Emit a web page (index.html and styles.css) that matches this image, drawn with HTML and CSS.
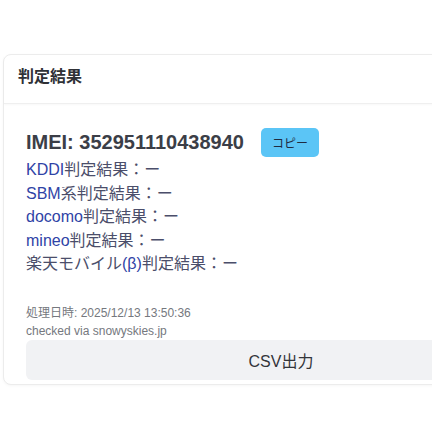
FILE: index.html
```html
<!DOCTYPE html>
<html lang="ja">
<head>
<meta charset="utf-8">
<link rel="stylesheet" href="styles.css">
</head>
<body>
<div class="page">
  <div class="card">
    <div class="card-header">判定結果</div>
    <div class="card-body">
      <div class="imei-row">
        <span class="imei">IMEI: 352951110438940</span>
        <button class="copy-btn">コピー</button>
      </div>
      <div class="results">
        <div class="line"><span class="lat">KDDI</span>判定結果：ー</div>
        <div class="line"><span class="lat">SBM</span>系判定結果：ー</div>
        <div class="line"><span class="lat">docomo</span>判定結果：ー</div>
        <div class="line"><span class="lat">mineo</span>判定結果：ー</div>
        <div class="line">楽天モバイル<span class="lat">(β)</span>判定結果：ー</div>
      </div>
      <div class="meta">
        <div>処理日時: 2025/12/13 13:50:36</div>
        <div>checked via snowyskies.jp</div>
      </div>
      <button class="csv-btn">CSV出力</button>
    </div>
  </div>
</div>
</body>
</html>
```
FILE: styles.css
```css
html, body {
  margin: 0;
  padding: 0;
  background: #ffffff;
}
body {
  font-family: "Liberation Sans", Arial, "Noto Sans CJK JP", sans-serif;
}
.page {
  width: 432px;
  height: 432px;
  overflow: hidden;
  padding-top: 54px;
  box-sizing: border-box;
}
.card {
  margin-left: 3px;
  width: 560px;
  border: 1px solid #ececec;
  border-radius: 8px;
  box-shadow: 0 1px 3px rgba(0,0,0,0.04);
  background: #fff;
}
.card-header {
  height: 49px;
  box-sizing: border-box;
  padding: 12px 14px 0 14px;
  font-size: 16px;
  line-height: 20px;
  font-weight: bold;
  color: #2f3136;
  border-bottom: 1px solid #efefef;
  box-shadow: 0 1px 2px rgba(0,0,0,0.03);
}
.card-body {
  padding: 23px 22px 4px 22px;
}
.imei-row {
  display: flex;
  align-items: center;
  gap: 17px;
  height: 30px;
}
.imei {
  font-size: 20px;
  font-weight: bold;
  color: #3b3e47;
}
.copy-btn {
  width: 58px;
  height: 29px;
  border: none;
  border-radius: 5px;
  background: #5bc5f6;
  color: #1f2b40;
  font-family: "Liberation Sans", "Noto Sans CJK JP", sans-serif;
  font-size: 12px;
  padding: 0;
}
.results {
  margin-top: 1px;
}
.line {
  font-size: 16px;
  line-height: 23.5px;
  color: #4b4e6a;
}
.lat {
  color: #2f43a6;
}
.meta {
  margin-top: 28px;
  font-size: 12px;
  line-height: 18px;
  color: #75787e;
}
.csv-btn {
  display: block;
  width: 510px;
  height: 40px;
  margin-top: 0;
  border: none;
  border-radius: 6px;
  background: #f1f2f4;
  color: #33353a;
  font-family: "Liberation Sans", "Noto Sans CJK JP", sans-serif;
  font-size: 16px;
  padding: 0;
}
```
